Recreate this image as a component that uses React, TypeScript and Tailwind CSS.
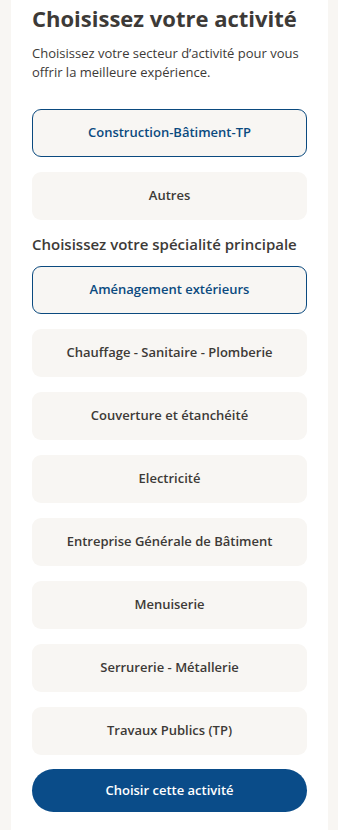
const specialites = [
  "Chauffage - Sanitaire - Plomberie",
  "Couverture et étanchéité",
  "Electricité",
  "Entreprise Générale de Bâtiment",
  "Menuiserie",
  "Serrurerie - Métallerie",
  "Travaux Publics (TP)",
];

function Choice({ label, selected }: { label: string; selected?: boolean }) {
  return (
    <button
      type="button"
      className={
        selected
          ? "flex h-[48px] w-full items-center justify-center rounded-[9px] border border-[#0b4a7f] bg-[#f8f6f3] text-[13px] font-semibold text-[#0b4a7f]"
          : "flex h-[48px] w-full items-center justify-center rounded-[9px] border border-transparent bg-[#f8f6f3] text-[13px] font-semibold text-[#3d3a37]"
      }
    >
      {label}
    </button>
  );
}

export default function App() {
  return (
    <div
      className="min-h-[830px] bg-[#f8f6f3] pl-[11px] pr-[10px]"
      style={{ fontFamily: '"Open Sans", sans-serif' }}
    >
      <div className="min-h-[830px] bg-white px-[21px]">
        <h1 className="pt-[2px] text-[22px] leading-[32px] font-bold text-[#3d3a37]">
          Choisissez votre activité
        </h1>
        <p className="mt-[10px] text-[13px] leading-[19px] text-[#3d3a37]">
          Choisissez votre secteur d’activité pour vous offrir la meilleure expérience.
        </p>

        <div className="mt-[27px] flex flex-col gap-[15px]">
          <Choice label="Construction-Bâtiment-TP" selected />
          <Choice label="Autres" />
        </div>

        <h2 className="mt-[13px] text-[15px] leading-[22px] font-semibold text-[#3d3a37]">
          Choisissez votre spécialité principale
        </h2>

        <div className="mt-[11px] flex flex-col gap-[15px]">
          <Choice label="Aménagement extérieurs" selected />
          {specialites.map(s => (
            <Choice key={s} label={s} />
          ))}
          <button
            type="button"
            className="-mt-px h-[43px] w-full rounded-full bg-[#0a4c89] text-[13px] font-semibold text-white"
          >
            Choisir cette activité
          </button>
        </div>
      </div>
    </div>
  );
}
